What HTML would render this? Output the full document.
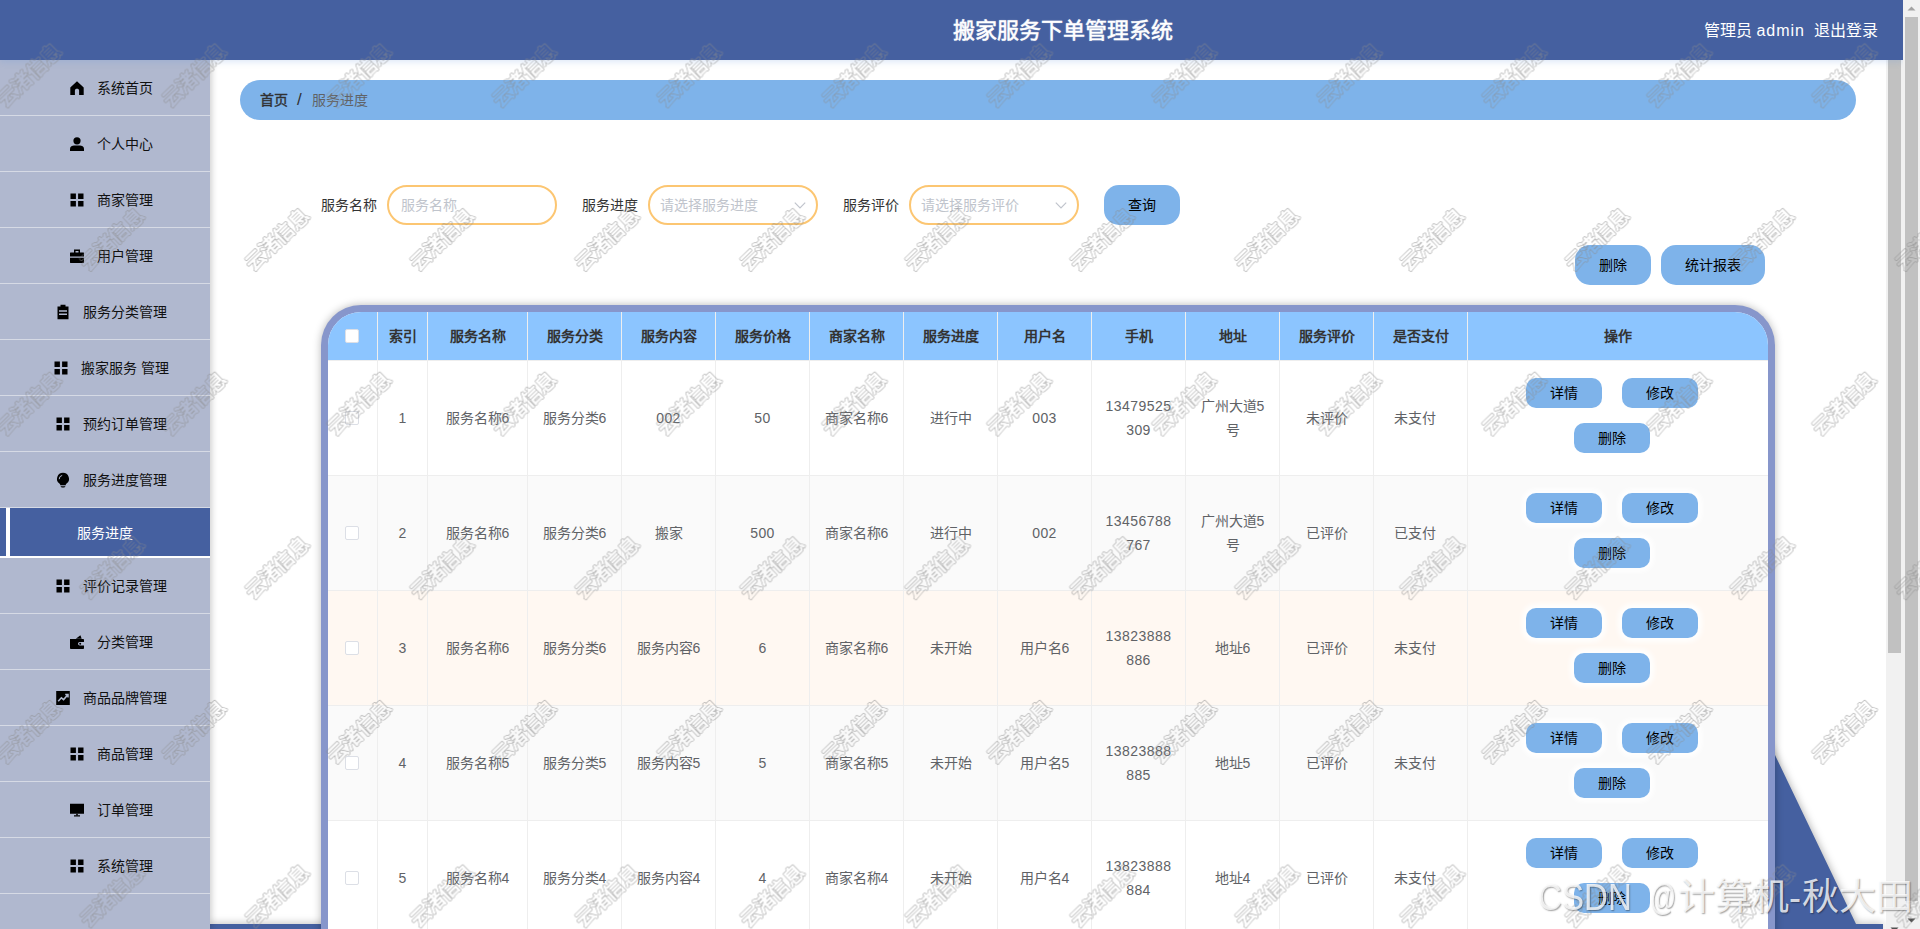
<!DOCTYPE html>
<html lang="zh-CN">
<head>
<meta charset="utf-8">
<title>搬家服务下单管理系统</title>
<style>
*{box-sizing:border-box;margin:0;padding:0}
html,body{width:1920px;height:929px;overflow:hidden;background:#fff;font-family:"Liberation Sans",sans-serif;font-size:14px;color:#333}
#app{position:relative;width:1920px;height:929px;overflow:hidden;background:#fff}

/* ---------- header ---------- */
#hd{position:absolute;left:0;top:0;width:1903px;height:60px;background:#4560a0;z-index:30;box-shadow:0 2px 6px rgba(100,150,220,.22)}
#hd .title{position:absolute;left:952px;top:0;width:221px;height:60px;line-height:62px;font-size:22px;font-weight:normal;color:#fff;white-space:nowrap;text-align:center;-webkit-text-stroke:.5px #fff;text-shadow:0 0 2px rgba(255,255,255,.35)}
#hd .user{position:absolute;right:25px;top:0;height:60px;line-height:62px;font-size:16px;color:#fff;white-space:nowrap}
#hd .user span{margin-left:10px}

/* ---------- sidebar ---------- */
#sb{position:absolute;left:0;top:60px;width:210px;height:869px;background:#b0b8cf;z-index:20;box-shadow:2px 0 6px rgba(0,0,0,.18)}
#sb .it{position:relative;height:56px;border-bottom:1px solid #d6dae5;line-height:57px;font-size:14px;color:#111}
#sb .it .tx{position:absolute;left:40px;right:0;text-align:center;white-space:nowrap}
#sb .it svg{position:absolute;top:20px;width:16px;height:16px}
#sb .sub{position:relative;height:50px;background:#b0b8cf}
#sb .sub .act{position:absolute;left:0;top:0;width:210px;height:48px;background:#4560a0;color:#fff;line-height:50px;text-align:center}
#sb .sub .act i{position:absolute;left:6px;top:0;width:4px;height:48px;background:#fff}
#sb .sub .ln{position:absolute;left:0;top:48px;width:210px;height:2px;background:#fff}

/* ---------- main ---------- */
#main{position:absolute;left:210px;top:60px;width:1676px;height:869px;background:#fff;z-index:5;overflow:hidden}

/* breadcrumb */
#bc{position:absolute;left:30px;top:20px;width:1616px;height:40px;border-radius:20px;background:#7eb3ea;line-height:40px;font-size:14px;white-space:nowrap}
#bc b{position:absolute;left:20px;font-weight:normal;color:#303133;-webkit-text-stroke:.4px #303133}
#bc i{position:absolute;left:57px;font-style:normal;color:#303133;font-weight:normal;font-size:17px;line-height:39px}
#bc span{position:absolute;left:72px;color:#606266}

/* filters */
.flt{position:absolute;top:125px;height:40px;line-height:40px;font-size:14px;color:#333;white-space:nowrap}
.inp{position:absolute;top:125px;width:170px;height:40px;border:2px solid #fcc672;border-radius:20px;background:#fff;line-height:36px;font-size:14px;color:#c0c4cc;white-space:nowrap}
.inp svg{position:absolute;right:9px;top:11px;width:14px;height:14px}
.btn{position:absolute;height:40px;border-radius:15px;background:#7eb3ea;color:#000;font-size:14px;line-height:40px;text-align:center;white-space:nowrap}

/* table */
#tw{position:absolute;left:111px;top:245px;width:1454px;height:700px;border:7px solid #8796cb;border-bottom:none;border-radius:40px 40px 0 0;background:#fff;overflow:hidden;box-shadow:0 0 8px rgba(0,0,0,.28)}
table{border-collapse:separate;border-spacing:0;table-layout:fixed;width:1440px}
th,td{border-right:1px solid #eee;border-bottom:1px solid #eee;text-align:center;font-size:14px;vertical-align:middle;word-break:break-all}
th{height:49px;background:#8cc5ff;color:#333;font-weight:bold;padding-bottom:3px}
td{height:115px;color:#606266;line-height:24px;padding:0 10px}
th:last-child,td:last-child{border-right:none}
tr.s td{background:#fafafa}
tr.h td{background:#fff8f2}
.ck{display:inline-block;width:14px;height:14px;border:1px solid #dcdfe6;border-radius:2px;background:#fff;vertical-align:middle}
td.op{padding:0}
td.n{letter-spacing:.45px}
.ob{position:absolute;width:76px;height:30px;border-radius:10px;background:#7eb3ea;color:#000;font-size:14px;line-height:30px;text-align:center;box-shadow:0 0 5px 4px rgba(255,255,255,.9)}
.opw{position:relative;width:300px;height:114px}

/* decorative blue triangle + bottom strip */
#tri{position:absolute;left:0;top:0;width:1676px;height:869px;z-index:0;filter:drop-shadow(0 0 4px rgba(0,0,0,.35))}
/* scrollbars */
.sbar{position:absolute;background:#f1f1f1;width:17px}
.sbar .th{position:absolute;left:2px;width:13px;background:#c1c1c1}
.sbar svg{position:absolute;left:0;width:17px;height:17px}

/* watermarks */
#wm{position:absolute;left:0;top:0;width:1920px;height:929px;z-index:100;pointer-events:none}
#wm text{font-family:"Liberation Sans",sans-serif;font-size:20px;font-weight:normal;stroke-linejoin:round;stroke-linecap:round}
#wm .wo{fill:#8a8a8a;stroke:#8a8a8a;stroke-width:2.300px;opacity:.72}
#wm .wi{fill:#000;stroke:#000;stroke-width:1.100px}
#csdn{position:absolute;left:0;top:0;width:1920px;height:929px;z-index:101;pointer-events:none;overflow:hidden}
#csdn span{position:absolute;top:875px;height:46px;line-height:46px;white-space:nowrap;color:rgba(255,255,255,.8);font-weight:300;text-shadow:1px 1px 1.500px rgba(0,0,0,.38);transform-origin:0 50%}
</style>
</head>
<body>
<div id="app">

<div id="hd">
  <div class="title">搬家服务下单管理系统</div>
  <div class="user">管理员 <em style="font-style:normal;letter-spacing:1px">admin</em><span style="margin-left:9px">退出登录</span></div>
</div>

<div id="sb">
  <div class="it"><svg style="left:69px" viewBox="0 0 16 16"><path d="M8 1.2 1.3 7.4V15h4.6v-4.6c0-.9.9-1.6 2.1-1.6s2.1.7 2.1 1.6V15h4.6V7.4z" fill="#000"/></svg><span class="tx">系统首页</span></div>
  <div class="it"><svg style="left:69px" viewBox="0 0 16 16"><circle cx="8" cy="4.8" r="3.6" fill="#000"/><path d="M1 15v-2.2C1 10.6 3.4 9.6 5 9.6h6c1.600 0 4 1 4 3.200V15z" fill="#000"/></svg><span class="tx">个人中心</span></div>
  <div class="it"><svg style="left:69px" viewBox="0 0 16 16"><path d="M1.500 1.500h5.400v5.400H1.500zM9.100 1.500h5.400v5.400H9.100zM1.500 9.100h5.400v5.400H1.500zM9.100 9.100h5.400v5.400H9.100z" fill="#000"/></svg><span class="tx">商家管理</span></div>
  <div class="it"><svg style="left:69px" viewBox="0 0 16 16"><path d="M5 1.500h6v3h3.500c.3 0 .5.200.5.500V8.600H1V5c0-.3.200-.5.500-.5H5zm1.500 1.400v1.600h3V2.900zM1 9.800h14v4.700c0 .3-.2.500-.5.500h-13c-.3 0-.5-.2-.5-.5z" fill="#000"/></svg><span class="tx">用户管理</span></div>
  <div class="it"><svg style="left:55px" viewBox="0 0 16 16"><path d="M5.500.8h5v1.700h3V15.200h-11V2.500h3zM4 6.200v1.600h8V6.200zm0 3.300v1.600h8V9.500z" fill="#000" fill-rule="evenodd"/></svg><span class="tx">服务分类管理</span></div>
  <div class="it"><svg style="left:53px" viewBox="0 0 16 16"><path d="M1.500 1.500h5.400v5.400H1.500zM9.100 1.500h5.400v5.400H9.100zM1.500 9.100h5.400v5.400H1.500zM9.100 9.100h5.400v5.400H9.100z" fill="#000"/></svg><span class="tx">搬家服务 管理</span></div>
  <div class="it"><svg style="left:55px" viewBox="0 0 16 16"><path d="M1.500 1.500h5.400v5.400H1.500zM9.100 1.500h5.400v5.400H9.100zM1.500 9.100h5.400v5.400H1.500zM9.100 9.100h5.400v5.400H9.100z" fill="#000"/></svg><span class="tx">预约订单管理</span></div>
  <div class="it"><svg style="left:55px" viewBox="0 0 16 16"><path d="M8 .8a6 6 0 0 1 3.600 10.800c-.6.500-.9 1-.9 1.600H5.300c0-.6-.3-1.100-.9-1.600A6 6 0 0 1 8 .8zM5.600 14.200h4.800c0 .8-1 1.400-2.400 1.400s-2.400-.6-2.400-1.400z" fill="#000"/><path d="M4.200 7.200A3.800 3.800 0 0 1 7.200 3.400" fill="none" stroke="#b0b8cf" stroke-width="1"/></svg><span class="tx">服务进度管理</span></div>
  <div class="sub"><div class="act"><i></i>服务进度</div><div class="ln"></div></div>
  <div class="it"><svg style="left:55px" viewBox="0 0 16 16"><path d="M1.500 1.500h5.400v5.400H1.500zM9.100 1.500h5.400v5.400H9.100zM1.500 9.100h5.400v5.400H1.500zM9.100 9.100h5.400v5.400H9.100z" fill="#000"/></svg><span class="tx">评价记录管理</span></div>
  <div class="it"><svg style="left:69px" viewBox="0 0 16 16"><path d="M6.800 4.700 11.400 1.300 12.700 4.700zM1 5h13.200c.4 0 .8.400.8.800V8h-4.200a1.800 1.800 0 0 0 0 3.600H15v2.600c0 .4-.4.800-.8.800H1.800c-.4 0-.8-.4-.8-.8z" fill="#000"/><circle cx="11.200" cy="9.800" r="1" fill="#000"/></svg><span class="tx">分类管理</span></div>
  <div class="it"><svg style="left:55px" viewBox="0 0 16 16"><path d="M1.200 1h13.600v14H1.200z" fill="#000"/><path d="M3.200 11.200 6.400 7.800 8.600 9.600 12.800 4.800M10.200 4.600h2.800v2.800" fill="none" stroke="#b0b8cf" stroke-width="1.500"/></svg><span class="tx">商品品牌管理</span></div>
  <div class="it"><svg style="left:69px" viewBox="0 0 16 16"><path d="M1.500 1.500h5.400v5.400H1.500zM9.100 1.500h5.400v5.400H9.100zM1.500 9.100h5.400v5.400H1.500zM9.100 9.100h5.400v5.400H9.100z" fill="#000"/></svg><span class="tx">商品管理</span></div>
  <div class="it"><svg style="left:69px" viewBox="0 0 16 16"><path d="M1 1.800h14v10H1zM5 13.200h6v1.200H5z" fill="#000"/><path d="M7.200 11.800h1.600v1.600H7.200z" fill="#000"/></svg><span class="tx">订单管理</span></div>
  <div class="it"><svg style="left:69px" viewBox="0 0 16 16"><path d="M1.500 1.500h5.400v5.400H1.500zM9.100 1.500h5.400v5.400H9.100zM1.500 9.100h5.400v5.400H1.500zM9.100 9.100h5.400v5.400H9.100z" fill="#000"/></svg><span class="tx">系统管理</span></div>
  <div class="it" style="border-bottom:none"></div>
</div>

<div id="main">
  <svg id="tri" viewBox="0 0 1676 869"><path d="M1500 590 1565 695 1646 864 1673 864 1673 880 0 880 0 864 1500 864z" fill="#4560a0"/></svg>
  <div id="bc"><b>首页</b><i>/</i><span>服务进度</span></div>
  <div class="flt" style="left:111px">服务名称</div>
  <div class="inp" style="left:177px;padding-left:12px">服务名称</div>
  <div class="flt" style="left:372px">服务进度</div>
  <div class="inp" style="left:438px;padding-left:10px">请选择服务进度<svg viewBox="0 0 14 14"><path d="M1.800 4.600 7 9.800 12.200 4.600" fill="none" stroke="#c0c4cc" stroke-width="1.200"/></svg></div>
  <div class="flt" style="left:633px">服务评价</div>
  <div class="inp" style="left:699px;padding-left:10px">请选择服务评价<svg viewBox="0 0 14 14"><path d="M1.800 4.600 7 9.800 12.200 4.600" fill="none" stroke="#c0c4cc" stroke-width="1.200"/></svg></div>
  <div class="btn" style="left:894px;top:125px;width:76px">查询</div>
  <div class="btn" style="left:1365px;top:185px;width:76px">删除</div>
  <div class="btn" style="left:1451px;top:185px;width:104px">统计报表</div>
  <div id="tw">
<table><colgroup><col style="width:50px"><col style="width:50px"><col style="width:100px"><col style="width:94px"><col style="width:94px"><col style="width:94px"><col style="width:94px"><col style="width:94px"><col style="width:94px"><col style="width:94px"><col style="width:94px"><col style="width:94px"><col style="width:94px"><col style="width:300px"></colgroup>
<tr><th style="padding:0 2px 3px 0"><span class="ck"></span></th><th>索引</th><th>服务名称</th><th>服务分类</th><th>服务内容</th><th>服务价格</th><th>商家名称</th><th>服务进度</th><th>用户名</th><th>手机</th><th>地址</th><th>服务评价</th><th>是否支付</th><th>操作</th></tr>
<tr><td style="padding:0 2px 3px 0"><span class="ck"></span></td><td class="n" style="padding:0">1</td><td>服务名称6</td><td>服务分类6</td><td class="n">002</td><td class="n">50</td><td>商家名称6</td><td>进行中</td><td class="n">003</td><td class="n">13479525<br>309</td><td>广州大道5号</td><td>未评价</td><td style="padding:0 16px 0 5px">未支付</td><td class="op"><div class="opw"><div class="ob" style="left:58px;top:17px">详情</div><div class="ob" style="left:154px;top:17px">修改</div><div class="ob" style="left:106px;top:62px">删除</div></div></td></tr>
<tr class="s"><td style="padding:0 2px 3px 0"><span class="ck"></span></td><td class="n" style="padding:0">2</td><td>服务名称6</td><td>服务分类6</td><td>搬家</td><td class="n">500</td><td>商家名称6</td><td>进行中</td><td class="n">002</td><td class="n">13456788<br>767</td><td>广州大道5号</td><td>已评价</td><td style="padding:0 16px 0 5px">已支付</td><td class="op"><div class="opw"><div class="ob" style="left:58px;top:17px">详情</div><div class="ob" style="left:154px;top:17px">修改</div><div class="ob" style="left:106px;top:62px">删除</div></div></td></tr>
<tr class="h"><td style="padding:0 2px 3px 0"><span class="ck"></span></td><td class="n" style="padding:0">3</td><td>服务名称6</td><td>服务分类6</td><td>服务内容6</td><td class="n">6</td><td>商家名称6</td><td>未开始</td><td>用户名6</td><td class="n">13823888<br>886</td><td>地址6</td><td>已评价</td><td style="padding:0 16px 0 5px">未支付</td><td class="op"><div class="opw"><div class="ob" style="left:58px;top:17px">详情</div><div class="ob" style="left:154px;top:17px">修改</div><div class="ob" style="left:106px;top:62px">删除</div></div></td></tr>
<tr class="s"><td style="padding:0 2px 3px 0"><span class="ck"></span></td><td class="n" style="padding:0">4</td><td>服务名称5</td><td>服务分类5</td><td>服务内容5</td><td class="n">5</td><td>商家名称5</td><td>未开始</td><td>用户名5</td><td class="n">13823888<br>885</td><td>地址5</td><td>已评价</td><td style="padding:0 16px 0 5px">未支付</td><td class="op"><div class="opw"><div class="ob" style="left:58px;top:17px">详情</div><div class="ob" style="left:154px;top:17px">修改</div><div class="ob" style="left:106px;top:62px">删除</div></div></td></tr>
<tr><td style="padding:0 2px 3px 0"><span class="ck"></span></td><td class="n" style="padding:0">5</td><td>服务名称4</td><td>服务分类4</td><td>服务内容4</td><td class="n">4</td><td>商家名称4</td><td>未开始</td><td>用户名4</td><td class="n">13823888<br>884</td><td>地址4</td><td>已评价</td><td style="padding:0 16px 0 5px">未支付</td><td class="op"><div class="opw"><div class="ob" style="left:58px;top:17px">详情</div><div class="ob" style="left:154px;top:17px">修改</div><div class="ob" style="left:106px;top:62px">删除</div></div></td></tr>
</table>
  </div>
</div>

<div class="sbar" style="left:1886px;top:0;height:940px;z-index:10">
  <div class="th" style="top:17px;height:636px"></div>
  <svg style="top:920.500px" viewBox="0 0 17 17"><path d="M4.500 6.500h8L8.500 10.500z" fill="#505050"/></svg>
</div>
<div class="sbar" style="left:1903px;top:0;height:929px;z-index:40">
  <svg style="top:0" viewBox="0 0 17 17"><path d="M4.500 10.500h8L8.500 6.500z" fill="#a3a3a3"/></svg>
  <div class="th" style="top:17px;height:884px"></div>
  <svg style="top:912px" viewBox="0 0 17 17"><path d="M4.500 6.500h8L8.500 10.500z" fill="#505050"/></svg>
</div>

<svg id="wm" viewBox="0 0 1920 929">
  <defs>
    <mask id="wmk" maskUnits="userSpaceOnUse" x="-60" y="-24" width="120" height="48">
      <rect x="-60" y="-24" width="120" height="48" fill="#fff"/>
      <text class="wi" text-anchor="middle" dominant-baseline="central">云渚信息</text>
    </mask>
    <g id="mk"><text class="wo" mask="url(#wmk)" text-anchor="middle" dominant-baseline="central">云渚信息</text></g>
    <pattern id="wp" x="29.500" y="75.500" width="165" height="328.200" patternUnits="userSpaceOnUse">
      <use href="#mk" transform="translate(82.500 164.100) rotate(-44)"/>
      <use href="#mk" transform="translate(0 0) rotate(-44)"/>
      <use href="#mk" transform="translate(165 0) rotate(-44)"/>
      <use href="#mk" transform="translate(0 328.200) rotate(-44)"/>
      <use href="#mk" transform="translate(165 328.200) rotate(-44)"/>
    </pattern>
  </defs>
  <rect x="0" y="0" width="1920" height="929" fill="url(#wp)"/>
</svg>
<div id="csdn">
  <span style="left:1538px;font-size:36px;transform:scaleX(.92)">CSDN</span>
  <span style="left:1650px;font-size:36px;transform:scaleX(.72)">@</span>
  <span style="left:1678px;font-size:37px">计算机</span>
  <span style="left:1789px;font-size:36px">-</span>
  <span style="left:1802px;font-size:37px">秋大田</span>
</div>

</div>
</body>
</html>
